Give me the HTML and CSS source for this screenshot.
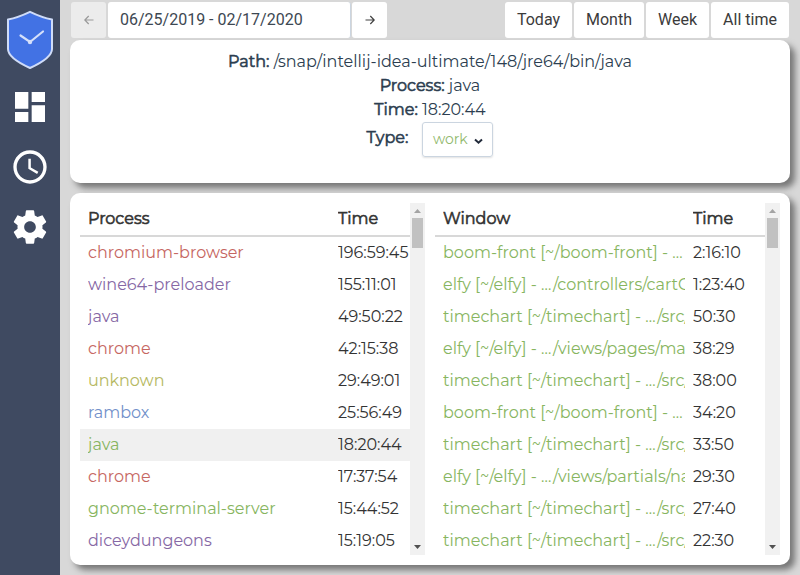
FILE: index.html
```html
<!DOCTYPE html>
<html lang="en">
<head>
<meta charset="utf-8">
<title>Time tracker</title>
<link rel="stylesheet" href="styles.css">
</head>
<body>
<nav class="sidebar">
  <svg class="logo" width="48" height="60" viewBox="0 0 48 60"><path d="M24 1.8 Q36 7.500 46 9.500 V39 Q46 48 24 58 Q2 48 2 39 V9.500 Q12 7.500 24 1.800Z" fill="#4272e4" stroke="#cfdcf8" stroke-width="2" stroke-linejoin="round"/><path d="M14.500 25.500 L24 32 L37 21.500" fill="none" stroke="#d5e0fa" stroke-width="2.2" stroke-linecap="round"/><circle cx="24" cy="32" r="2.2" fill="#d5e0fa"/></svg>
  <svg class="icon" width="40" height="40" viewBox="0 0 24 24"><path d="M3 13h8V3H3v10zm0 8h8v-6H3v6zm10 0h8V11h-8v10zm0-18v6h8V3h-8z"/></svg>
  <svg class="icon" width="40" height="40" viewBox="0 0 24 24"><path d="M11.99 2C6.47 2 2 6.48 2 12s4.47 10 9.99 10C17.52 22 22 17.52 22 12S17.52 2 11.99 2zM12 20c-4.42 0-8-3.58-8-8s3.58-8 8-8 8 3.58 8 8-3.58 8-8 8zm.5-13H11v6l5.25 3.15.75-1.23-4.5-2.67z"/></svg>
  <svg class="icon" width="40" height="40" viewBox="0 0 24 24"><path d="M19.43 12.98c.04-.32.07-.64.07-.98s-.03-.66-.07-.98l2.11-1.65c.19-.15.24-.42.12-.64l-2-3.46c-.12-.22-.39-.3-.61-.22l-2.49 1c-.52-.4-1.08-.73-1.69-.98l-.38-2.65C14.46 2.18 14.25 2 14 2h-4c-.25 0-.46.18-.49.42l-.38 2.65c-.61.25-1.17.59-1.69.98l-2.49-1c-.23-.09-.49 0-.61.22l-2 3.46c-.13.22-.07.49.12.64l2.11 1.65c-.04.32-.07.65-.07.98s.03.66.07.98l-2.11 1.65c-.19.15-.24.42-.12.64l2 3.46c.12.22.39.3.61.22l2.49-1c.52.4 1.08.73 1.69.98l.38 2.65c.03.24.24.42.49.42h4c.25 0 .46-.18.49-.42l.38-2.65c.61-.25 1.17-.59 1.69-.98l2.49 1c.23.09.49 0 .61-.22l2-3.46c.12-.22.07-.49-.12-.64l-2.11-1.65zM12 15.5c-1.93 0-3.5-1.57-3.5-3.5s1.57-3.5 3.5-3.5 3.5 1.57 3.5 3.5-1.57 3.5-3.5 3.5z"/></svg>
</nav>
<main class="content">
  <header class="toolbar">
    <button class="btn arrow disabled"><svg width="10" height="10" viewBox="0 0 10 10"><path d="M9.500 5H1M4.700 1L.800 5l3.900 4"/></svg></button>
    <div class="range">06/25/2019 - 02/17/2020</div>
    <button class="btn arrow"><svg width="10" height="10" viewBox="0 0 10 10"><path d="M.500 5H9M5.300 1l3.900 4-3.900 4"/></svg></button>
    <button class="btn today">Today</button>
    <button class="btn month">Month</button>
    <button class="btn week">Week</button>
    <button class="btn all">All time</button>
  </header>
  <section class="panel details">
    <p class="path"><b>Path:</b> /snap/intellij-idea-ultimate/148/jre64/bin/java</p>
    <p><b>Process:</b> java</p>
    <p><b>Time:</b> 18:20:44</p>
    <div class="type"><b>Type:</b><div class="select">work<svg width="9" height="7" viewBox="0 0 9 7"><path d="M1 1.500l3.500 3.200L8 1.500"/></svg></div></div>
  </section>
  <section class="panel lists">
    <div class="scroller">
      <div class="table processes">
        <div class="row head"><span>Process</span><span>Time</span></div>
        <div class="row"><span class="red">chromium-browser</span><span>196:59:45</span></div>
        <div class="row"><span class="purple">wine64-preloader</span><span>155:11:01</span></div>
        <div class="row"><span class="purple">java</span><span>49:50:22</span></div>
        <div class="row"><span class="red">chrome</span><span>42:15:38</span></div>
        <div class="row"><span class="olive">unknown</span><span>29:49:01</span></div>
        <div class="row"><span class="blue">rambox</span><span>25:56:49</span></div>
        <div class="row selected"><span class="green">java</span><span>18:20:44</span></div>
        <div class="row"><span class="red">chrome</span><span>17:37:54</span></div>
        <div class="row"><span class="green">gnome-terminal-server</span><span>15:44:52</span></div>
        <div class="row"><span class="purple">diceydungeons</span><span>15:19:05</span></div>
      </div>
      <div class="bar"><svg width="15" height="15"><path d="M4 10h7L7.500 6z" fill="#a3a3a3"/></svg><i class="thumb"></i><svg class="down" width="15" height="15"><path d="M4 5h7L7.500 9z" fill="#505050"/></svg></div>
    </div>
    <div class="scroller">
      <div class="table windows">
        <div class="row head"><span>Window</span><span>Time</span></div>
        <div class="row"><span class="green">boom-front [~/boom-front] - …</span><span>2:16:10</span></div>
        <div class="row"><span class="green">elfy [~/elfy] - …/controllers/cartC</span><span>1:23:40</span></div>
        <div class="row"><span class="green">timechart [~/timechart] - …/src/</span><span>50:30</span></div>
        <div class="row"><span class="green">elfy [~/elfy] - …/views/pages/ma</span><span>38:29</span></div>
        <div class="row"><span class="green">timechart [~/timechart] - …/src/</span><span>38:00</span></div>
        <div class="row"><span class="green">boom-front [~/boom-front] - …</span><span>34:20</span></div>
        <div class="row"><span class="green">timechart [~/timechart] - …/src/</span><span>33:50</span></div>
        <div class="row"><span class="green">elfy [~/elfy] - …/views/partials/na</span><span>29:30</span></div>
        <div class="row"><span class="green">timechart [~/timechart] - …/src/</span><span>27:40</span></div>
        <div class="row"><span class="green">timechart [~/timechart] - …/src/</span><span>22:30</span></div>
      </div>
      <div class="bar"><svg width="15" height="15"><path d="M4 10h7L7.500 6z" fill="#a3a3a3"/></svg><i class="thumb"></i><svg class="down" width="15" height="15"><path d="M4 5h7L7.500 9z" fill="#505050"/></svg></div>
    </div>
  </section>
</main>
</body>
</html>
```
FILE: styles.css
```css
* { box-sizing: border-box; }
body { margin: 0; height: 575px; display: flex; overflow: hidden; background: #d8d8d8; color: #2c3e50; font: 400 16px/24px Montserrat, Inter, sans-serif; }
b { font-weight: 400; -webkit-text-stroke: .6px; }
p { margin: 0; }
.sidebar { width: 60px; height: 575px; background: #3f4a61; display: flex; flex-direction: column; align-items: center; padding-top: 10px; }
.logo { margin-bottom: 17px; }
.icon { fill: #fff; margin-bottom: 20px; flex: none; }
.content { width: 740px; padding: 2px 10px 10px; display: flex; flex-direction: column; }
.toolbar { display: flex; height: 36px; margin: 0 1px 2px; gap: 2px; }
.btn { border: 0; border-radius: 3px; background: #fff; color: #3b3b3b; font: 400 16px/24px Roboto, sans-serif; padding: 0 0 1px; height: 36px; flex: none; }
.arrow { width: 35px; display: flex; align-items: center; justify-content: center; }
.arrow svg { fill: none; stroke: #404040; stroke-width: 1.2; }
.disabled { background: #ececec; }
.disabled svg { stroke: #999; }
.range { width: 243px; background: #fff; border-radius: 3px; font: 400 16px/35px Roboto, sans-serif; padding-left: 12px; color: #3d4852; border-right: 1px solid #cbd5e0; margin-right: -1px; }
.today { width: 67px; margin-left: auto; }
.month { width: 70px; }
.week { width: 63px; }
.all { width: 78px; }
.panel { background: #fff; border-radius: 10px; box-shadow: 5px 5px 6px #777; }
.details { height: 143px; padding-top: 10px; text-align: center; margin-bottom: 10px; }
.type { display: flex; justify-content: center; align-items: center; gap: 14px; }
.type b { margin-top: -3px; }
.select { width: 71px; height: 35px; border: 1px solid #cbd5e0; border-radius: 3px; box-shadow: 0 1px 2px rgba(0,0,0,.12); color: #91b96c; font-size: 14px; display: flex; align-items: center; justify-content: center; gap: 6px; padding-bottom: 2px; }
.select svg { fill: none; stroke: #222b3b; stroke-width: 2; margin-top: 5px; }
.lists { height: 372px; padding: 10px; display: flex; gap: 10px; }
.scroller { width: 345px; height: 352px; overflow: hidden; display: flex; }
.table { width: 330px; color: #333; flex: none; }
.row { height: 32px; display: grid; grid-template-columns: 250px 80px; line-height: 31px; white-space: nowrap; }
.row span { margin-left: 8px; overflow: hidden; }
.head { height: 34px; border-bottom: 2px solid #d8d8d8; -webkit-text-stroke: .6px; }
.selected { background: #f0f0f0; }
.red { color: #c66661; }
.purple { color: #8668a5; }
.olive { color: #b5b861; }
.blue { color: #718fc9; }
.green { color: #87b560; }
.bar { width: 15px; background: #f1f1f1; display: flex; flex-direction: column; align-items: center; }
.bar svg { flex: none; }
.thumb { width: 11px; height: 30px; background: #c1c1c1; }
.down { margin-top: auto; }
```
